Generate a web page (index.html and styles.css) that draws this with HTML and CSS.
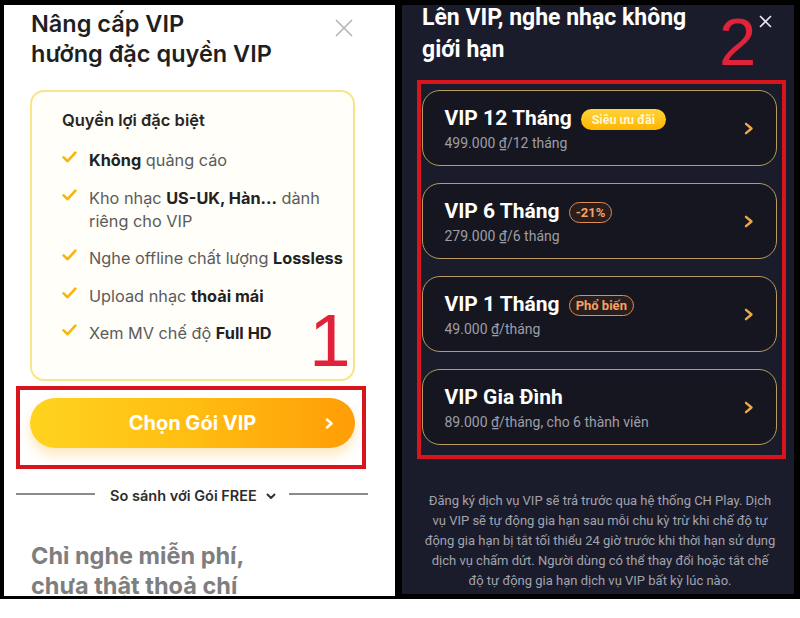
FILE: index.html
```html
<!DOCTYPE html>
<html lang="vi">
<head>
<meta charset="utf-8">
<title>VIP</title>
<link rel="stylesheet" href="styles.css">
</head>
<body>
<div class="frame">
  <section class="panel light">
    <header class="lhead">
      <h1 class="ltitle">Nâng cấp VIP<br>hưởng đặc quyền VIP</h1>
      <svg class="lclose" width="18" height="18" viewBox="0 0 18 18"><path d="M1 1L17 17M17 1L1 17" stroke="#b3b3b3" stroke-width="1.6" fill="none"/></svg>
    </header>
    <div class="perks">
      <div class="perks-title">Quyền lợi đặc biệt</div>
      <ul class="perk-list">
        <li><svg class="chk" width="15" height="12" viewBox="0 0 15 12"><path d="M1.6 6.4L5.6 10.2L13.4 1.6" stroke="#f6b60c" stroke-width="2.6" fill="none" stroke-linecap="round" stroke-linejoin="round"/></svg><span><b>Không</b> quảng cáo</span></li>
        <li><svg class="chk" width="15" height="12" viewBox="0 0 15 12"><path d="M1.6 6.4L5.6 10.2L13.4 1.6" stroke="#f6b60c" stroke-width="2.6" fill="none" stroke-linecap="round" stroke-linejoin="round"/></svg><span>Kho nhạc <b>US-UK, Hàn...</b> dành<br>riêng cho VIP</span></li>
        <li><svg class="chk" width="15" height="12" viewBox="0 0 15 12"><path d="M1.6 6.4L5.6 10.2L13.4 1.6" stroke="#f6b60c" stroke-width="2.6" fill="none" stroke-linecap="round" stroke-linejoin="round"/></svg><span>Nghe offline chất lượng <b>Lossless</b></span></li>
        <li><svg class="chk" width="15" height="12" viewBox="0 0 15 12"><path d="M1.6 6.4L5.6 10.2L13.4 1.6" stroke="#f6b60c" stroke-width="2.6" fill="none" stroke-linecap="round" stroke-linejoin="round"/></svg><span>Upload nhạc <b>thoải mái</b></span></li>
        <li><svg class="chk" width="15" height="12" viewBox="0 0 15 12"><path d="M1.6 6.4L5.6 10.2L13.4 1.6" stroke="#f6b60c" stroke-width="2.6" fill="none" stroke-linecap="round" stroke-linejoin="round"/></svg><span>Xem MV chế độ <b>Full HD</b></span></li>
      </ul>
    </div>
    <div class="mark mark-left">
      <button class="cta"><span>Chọn Gói VIP</span><svg class="cta-chev" width="9" height="11" viewBox="0 0 9 11"><path d="M2 1.5L6.5 5.5L2 9.5" stroke="#fff" stroke-width="2.4" fill="none" stroke-linecap="round" stroke-linejoin="round"/></svg></button>
    </div>
    <div class="compare">
      <span class="cline"></span>
      <span class="ctext">So sánh với Gói FREE</span>
      <svg width="10" height="7" viewBox="0 0 10 7"><path d="M1.5 1.5L5 5L8.5 1.5" stroke="#333" stroke-width="2" fill="none" stroke-linecap="round" stroke-linejoin="round"/></svg>
      <span class="cline"></span>
    </div>
    <p class="free">Chỉ nghe miễn phí,<br>chưa thật thoả chí</p>
    <span class="anno anno1">1</span>
  </section>

  <section class="panel dark">
    <header class="rhead">
      <h2 class="rtitle">Lên VIP, nghe nhạc không<br>giới hạn</h2>
      <svg class="rclose" width="13" height="13" viewBox="0 0 13 13"><path d="M1 1L12 12M12 1L1 12" stroke="#e8e8ee" stroke-width="1.6" fill="none"/></svg>
    </header>
    <div class="mark mark-right">
      <div class="plan">
        <div class="plan-info">
          <div class="plan-name">VIP 12 Tháng<span class="badge badge-hot">Siêu ưu đãi</span></div>
          <div class="plan-price">499.000 ₫/12 tháng</div>
        </div>
        <svg class="chev" width="10" height="13" viewBox="0 0 10 13"><path d="M2 1.8L7.5 6.5L2 11.2" stroke="#f0a646" stroke-width="2.4" fill="none" stroke-linecap="round" stroke-linejoin="round"/></svg>
      </div>
      <div class="plan">
        <div class="plan-info">
          <div class="plan-name">VIP 6 Tháng<span class="badge badge-line">-21%</span></div>
          <div class="plan-price">279.000 ₫/6 tháng</div>
        </div>
        <svg class="chev" width="10" height="13" viewBox="0 0 10 13"><path d="M2 1.8L7.5 6.5L2 11.2" stroke="#f0a646" stroke-width="2.4" fill="none" stroke-linecap="round" stroke-linejoin="round"/></svg>
      </div>
      <div class="plan">
        <div class="plan-info">
          <div class="plan-name">VIP 1 Tháng<span class="badge badge-line">Phổ biến</span></div>
          <div class="plan-price">49.000 ₫/tháng</div>
        </div>
        <svg class="chev" width="10" height="13" viewBox="0 0 10 13"><path d="M2 1.8L7.5 6.5L2 11.2" stroke="#f0a646" stroke-width="2.4" fill="none" stroke-linecap="round" stroke-linejoin="round"/></svg>
      </div>
      <div class="plan">
        <div class="plan-info">
          <div class="plan-name">VIP Gia Đình</div>
          <div class="plan-price">89.000 ₫/tháng, cho 6 thành viên</div>
        </div>
        <svg class="chev" width="10" height="13" viewBox="0 0 10 13"><path d="M2 1.8L7.5 6.5L2 11.2" stroke="#f0a646" stroke-width="2.4" fill="none" stroke-linecap="round" stroke-linejoin="round"/></svg>
      </div>
    </div>
    <p class="terms">Đăng ký dịch vụ VIP sẽ trả trước qua hệ thống CH Play. Dịch<br>vụ VIP sẽ tự động gia hạn sau mỗi chu kỳ trừ khi chế độ tự<br>động gia hạn bị tắt tối thiểu 24 giờ trước khi thời hạn sử dụng<br>dịch vụ chấm dứt. Người dùng có thể thay đổi hoặc tắt chế<br>độ tự động gia hạn dịch vụ VIP bất kỳ lúc nào.</p>
    <span class="anno anno2">2</span>
  </section>
</div>
</body>
</html>
```

FILE: styles.css
```css
* { box-sizing: border-box; }
html, body { margin: 0; padding: 0; background: #fff; }
.frame {
  width: 800px;
  height: 599px;
  background: #000;
  display: flex;
  align-items: flex-start;
  gap: 7px;
  padding: 5px 0 0 4px;
}
.panel { position: relative; overflow: hidden; }

/* ---------- left ---------- */
.light {
  width: 391px;
  height: 591px;
  background: #fff;
  padding: 4px 40px 0 26px;
  font-family: Inter, "Noto Sans", sans-serif;
  color: #222;
}
.lhead { display: flex; justify-content: space-between; align-items: flex-start; }
.ltitle {
  margin: 0;
  font-size: 23.5px;
  line-height: 30px;
  font-weight: 600;
  color: #1f1f1f;
  padding-left: 1px;
}
.lclose { margin-top: 10px; margin-right: 2px; }
.perks {
  margin-top: 21px;
  border: 2px solid #f6e58c;
  border-radius: 14px;
  background: #fffef9;
  padding: 17px 2px 34px 30px;
}
.perks-title { font-size: 16.5px; line-height: 23px; font-weight: 600; color: #262626; }
.perk-list {
  list-style: none;
  margin: 17px 0 0;
  padding: 0;
  display: flex;
  flex-direction: column;
  gap: 14.5px;
}
.perk-list li {
  display: flex;
  align-items: flex-start;
  gap: 12px;
  font-size: 16.3px;
  line-height: 23px;
  color: #5b5b5b;
  white-space: nowrap;
}
.perk-list b { color: #222; font-weight: 700; }
.chk { margin-top: 2px; flex: none; }

.mark { border: 4px solid #d8141d; }
.mark-left {
  margin: 5px -11px 0 -14px;
  padding: 8px 7px 17px 10px;
}
.cta {
  width: 325px;
  height: 50px;
  border: 0;
  border-radius: 25px;
  background: linear-gradient(90deg, #ffd31f 0%, #ffbd12 50%, #ff9d06 100%);
  box-shadow: 0 7px 12px rgba(255, 170, 20, 0.28);
  display: flex;
  align-items: center;
  justify-content: center;
  position: relative;
  font-family: Inter, "Noto Sans", sans-serif;
  font-size: 20px;
  font-weight: 700;
  color: #fff;
  padding: 0;
}
.cta-chev { position: absolute; right: 21px; top: 20px; }

.compare {
  margin: 17px -13px 0 -14px;
  display: flex;
  align-items: center;
  height: 20px;
}
.cline { flex: 1; height: 1.5px; background: #8a8a8a; margin-bottom: 4px; }
.ctext { font-size: 14.5px; font-weight: 600; color: #2e2e2e; margin: 0 9px 0 15px; line-height: 20px; }
.compare svg { margin-right: 13px; }

.free {
  margin: 35px 0 0;
  font-size: 23.5px;
  line-height: 30px;
  font-weight: 700;
  color: #7e7e7e;
  padding-left: 1px;
}

.anno {
  position: absolute;
  font-family: "Liberation Sans", Arial, sans-serif;
  color: #e0233a;
  line-height: 1;
  font-weight: 400;
}
.anno1 { font-size: 75px; left: 305px; top: 298px; }
.anno2 { font-size: 67px; left: 317px; top: 3px; }

/* ---------- right ---------- */
.dark {
  width: 392px;
  height: 589px;
  background: #1b1c2b;
  padding: 0 8px 0 15px;
  font-family: Roboto, "Noto Sans", sans-serif;
  color: #fff;
}
.rhead {
  display: flex;
  justify-content: space-between;
  align-items: flex-start;
  padding: 0 14px 0 5px;
}
.rtitle {
  margin: -3px 0 0;
  font-size: 23px;
  line-height: 32px;
  font-weight: 700;
  color: #fff;
}
.rclose { margin-top: 10px; }
.mark-right {
  margin-top: 14px;
  padding: 6px 5px 10px 1px;
  display: flex;
  flex-direction: column;
  gap: 17px;
}
.plan {
  height: 76px;
  border: 1.5px solid #b99b5f;
  border-radius: 18px;
  background: #15161f;
  display: flex;
  align-items: center;
  justify-content: space-between;
  padding: 0 22px 0 21.5px;
}
.plan-info { padding-top: 2px; }
.plan-name {
  display: flex;
  align-items: center;
  font-size: 21px;
  line-height: 26px;
  font-weight: 700;
  color: #fff;
}
.plan-price {
  margin-top: 2.4px;
  font-size: 14px;
  line-height: 20px;
  color: #9d9ea8;
}
.badge {
  margin-left: 9px;
  margin-top: 4px;
  height: 21px;
  border-radius: 11px;
  display: inline-flex;
  align-items: center;
  font-weight: 700;
  line-height: 1;
}
.badge-hot {
  background: linear-gradient(180deg, #ffd43c 0%, #ffb400 100%);
  color: #fff7d6;
  font-size: 12.5px;
  padding: 0 11px;
}
.badge-line {
  border: 1.5px solid #df8c55;
  background: #2a1e1c;
  color: #f3a268;
  font-size: 13px;
  padding: 0 6px;
}
.chev { flex: none; }
.terms {
  margin: 32px 0 0 5px;
  width: 356px;
  text-align: center;
  font-size: 13px;
  line-height: 20px;
  color: #a2a3ad;
  white-space: nowrap;
}
```
